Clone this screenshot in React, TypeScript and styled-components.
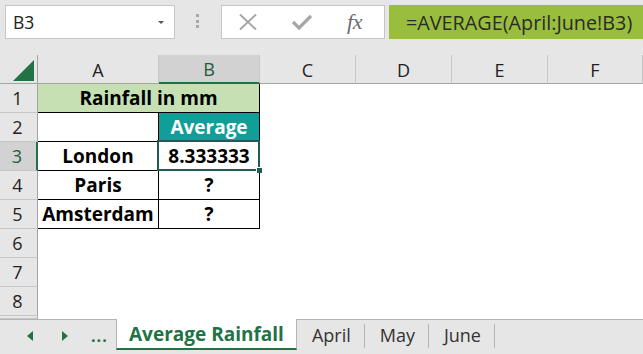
import React from 'react'
import styled, { createGlobalStyle, css } from 'styled-components'

const GlobalStyle = createGlobalStyle`
	html, body {
		margin: 0;
		padding: 0;
		background: #e6e6e6;
	}
	body {
		font-family: 'Open Sans', 'Noto Sans', sans-serif;
	}
`

const GREEN = '#217346'
const UI_BG = '#e6e6e6'
const BOX_LINE = '#c6c6c6'

const Frame = styled.div`
	width: 643px;
	height: 354px;
	display: flex;
	flex-direction: column;
	background: ${UI_BG};
	overflow: hidden;
`

/* formula bar */

const Toolbar = styled.div`
	height: 50px;
	flex: none;
	display: flex;
	align-items: flex-start;
	padding: 5px 0 0 5px;
	box-sizing: border-box;
`

const NameBox = styled.div`
	width: 170px;
	height: 34px;
	box-sizing: border-box;
	background: #fff;
	border: 1px solid ${BOX_LINE};
	display: flex;
	align-items: center;
	justify-content: space-between;
	padding: 0 10px 0 7px;
	font-size: 17.5px;
	color: #222;
`

const DropArrow = styled.span`
	width: 0;
	height: 0;
	border-left: 3.5px solid transparent;
	border-right: 3.5px solid transparent;
	border-top: 3.5px solid #555;
	margin-top: 1px;
`

const Grip = styled.div`
	display: flex;
	flex-direction: column;
	gap: 2.5px;
	margin: 9px 22px 0 21px;
	span {
		width: 3px;
		height: 3px;
		background: #a8a8a8;
	}
`

const ButtonBox = styled.div`
	width: 164px;
	height: 34px;
	box-sizing: border-box;
	background: #fff;
	border: 1px solid ${BOX_LINE};
	display: flex;
	align-items: center;
	padding-left: 17px;
	gap: 35px;
`

const Fx = styled.span`
	font-family: 'Liberation Serif', serif;
	font-style: italic;
	font-size: 22px;
	color: #6b6b6b;
	margin-left: 0;
	letter-spacing: -0.3px;
`

const FormulaInput = styled.div`
	flex: 1;
	height: 34px;
	margin-left: 4px;
	background: #99be3b;
	display: flex;
	align-items: center;
	padding-left: 17px;
	font-size: 19.8px;
	color: #2b2b2b;
	white-space: nowrap;
`

/* grid */

const Sheet = styled.div`
	flex: none;
	display: grid;
	grid-template-columns: 38px 121px 101px 96px 96px 96px 1fr;
	grid-template-rows: 29px repeat(8, 29px) 3px;
	padding-top: 5px;
	background: #fff;
	box-shadow: inset 0 5px 0 ${UI_BG};
`

const headerBase = css`
	background: ${UI_BG};
	display: flex;
	align-items: center;
	justify-content: center;
	font-size: 18px;
	color: #222;
	box-sizing: border-box;
`

const Corner = styled.div`
	${headerBase};
	border-right: 1px solid #a4a4a4;
	border-bottom: 1px solid #a4a4a4;
	justify-content: flex-end;
	align-items: flex-end;
	padding: 0 3px 2px 0;
`

const ColHeader = styled.div<{ $selected?: boolean }>`
	${headerBase};
	border-right: 1px solid ${BOX_LINE};
	border-bottom: 1px solid #a4a4a4;
	padding-top: 1px;
	${(p) =>
		p.$selected &&
		css`
			background: #d2d2d2;
			color: #1e5b3b;
			border-bottom: 2px solid ${GREEN};
		`}
`

const RowHeader = styled.div<{ $selected?: boolean }>`
	${headerBase};
	border-right: 1px solid #a4a4a4;
	border-bottom: 1px solid ${BOX_LINE};
	padding-right: 2px;
	${(p) =>
		p.$selected &&
		css`
			background: #d2d2d2;
			color: #1e5b3b;
			border-right: 2px solid ${GREEN};
		`}
`

const Cell = styled.div<{
	$bordered?: boolean
	$fill?: string
	$color?: string
	$span?: number
	$active?: boolean
}>`
	position: relative;
	box-sizing: border-box;
	display: flex;
	align-items: center;
	justify-content: center;
	font-size: 19px;
	font-weight: 700;
	color: ${(p) => p.$color || '#000'};
	background: ${(p) => p.$fill || '#fff'};
	grid-column: span ${(p) => p.$span || 1};
	${(p) =>
		p.$bordered &&
		css`
			border-right: 1px solid #000;
			border-bottom: 1px solid #000;
		`}
	${(p) =>
		p.$active &&
		css`
			z-index: 2;
			&::before {
				content: '';
				position: absolute;
				top: -2px;
				left: -2px;
				right: -1px;
				bottom: -1px;
				border: 2px solid #1f5c55;
			}
			&::after {
				content: '';
				position: absolute;
				right: -3px;
				bottom: -3px;
				width: 5px;
				height: 5px;
				background: #1f5c55;
				border-left: 1px solid #fff;
				border-top: 1px solid #fff;
			}
		`}
`

/* sheet tabs */

const TabBar = styled.div`
	flex: 1;
	display: flex;
	align-items: stretch;
	border-top: 1px solid #b4b4b4;
	padding-bottom: 4px;
`

const TabNav = styled.div`
	width: 116px;
	flex: none;
	display: flex;
	align-items: center;
	padding-left: 27px;
	box-sizing: border-box;
	padding-top: 2px;
`

const Arrow = styled.span<{ $dir: 'left' | 'right' }>`
	width: 0;
	height: 0;
	border-top: 5px solid transparent;
	border-bottom: 5px solid transparent;
	${(p) =>
		p.$dir === 'left'
			? css`
					border-right: 6px solid ${GREEN};
				`
			: css`
					border-left: 6px solid ${GREEN};
					margin-left: 29px;
				`}
`

const Dots = styled.span`
	margin-left: 23px;
	color: ${GREEN};
	font-weight: 700;
	font-size: 16px;
	letter-spacing: 1px;
	line-height: 1;
`

const Tab = styled.div<{ $active?: boolean }>`
	display: flex;
	align-items: center;
	padding: 0 14px 0 15px;
	font-size: 18px;
	color: #333;
	position: relative;
	white-space: nowrap;
	${(p) =>
		p.$active
			? css`
					background: #fff;
					margin-top: -1px;
					border-left: 1px solid #b4b4b4;
					border-right: 1px solid #b4b4b4;
					border-bottom: 2px solid ${GREEN};
					color: ${GREEN};
					font-weight: 700;
					font-size: 19px;
					padding: 0 12px 0 12px;
				`
			: css`
					&::after {
						content: '';
						position: absolute;
						right: 0;
						top: 4px;
						bottom: 2px;
						width: 1px;
						background: #b4b4b4;
					}
				`}
`

const CloseIcon = () => (
	<svg width="18" height="16" viewBox="0 0 18 16">
		<path d="M1 0.5 L17 15.5 M17 0.5 L1 15.5" stroke="#a6a6a6" strokeWidth="2" fill="none" />
	</svg>
)

const CheckIcon = () => (
	<svg width="20" height="16" viewBox="0 0 20 16">
		<path d="M1 8 L7 14 L19 2" stroke="#a6a6a6" strokeWidth="3.2" fill="none" />
	</svg>
)

const columns = ['A', 'B', 'C', 'D', 'E', 'F']

type Row = { a?: string; b?: string; bFill?: string; bColor?: string; merged?: string }

const rows: Row[] = [
	{ merged: 'Rainfall in mm' },
	{ a: '', b: 'Average', bFill: '#119d98', bColor: '#fff' },
	{ a: 'London', b: '8.333333' },
	{ a: 'Paris', b: '?' },
	{ a: 'Amsterdam', b: '?' },
]

const blanks = (n: number, key: string) =>
	Array.from({ length: n }, (_, i) => <Cell key={`${key}-${i}`} />)

export default function App() {
	return (
		<Frame>
			<GlobalStyle />
			<Toolbar>
				<NameBox>
					B3
					<DropArrow />
				</NameBox>
				<Grip>
					<span />
					<span />
					<span />
				</Grip>
				<ButtonBox>
					<CloseIcon />
					<CheckIcon />
					<Fx>fx</Fx>
				</ButtonBox>
				<FormulaInput>=AVERAGE(April:June!B3)</FormulaInput>
			</Toolbar>

			<Sheet>
				<Corner>
					<svg width="21" height="21" viewBox="0 0 21 21">
						<polygon points="21,0 21,21 0,21" fill={GREEN} />
					</svg>
				</Corner>
				{columns.map((c) => (
					<ColHeader key={c} $selected={c === 'B'}>
						{c}
					</ColHeader>
				))}

				{Array.from({ length: 8 }, (_, i) => {
					const r = rows[i]
					const n = i + 1
					return (
						<React.Fragment key={n}>
							<RowHeader $selected={n === 3}>{n}</RowHeader>
							{r && r.merged ? (
								<Cell $bordered $span={2} $fill="#c6e0b4">
									{r.merged}
								</Cell>
							) : r ? (
								<>
									<Cell $bordered>{r.a}</Cell>
									<Cell $bordered $fill={r.bFill} $color={r.bColor} $active={n === 3}>
										{r.b}
									</Cell>
								</>
							) : (
								blanks(2, `ab${n}`)
							)}
							{blanks(4, `r${n}`)}
						</React.Fragment>
					)
				})}
				<RowHeader />
				{blanks(6, 'tail')}
			</Sheet>

			<TabBar>
				<TabNav>
					<Arrow $dir="left" />
					<Arrow $dir="right" />
					<Dots>...</Dots>
				</TabNav>
				<Tab $active>Average Rainfall</Tab>
				<Tab>April</Tab>
				<Tab>May</Tab>
				<Tab>June</Tab>
			</TabBar>
		</Frame>
	)
}
